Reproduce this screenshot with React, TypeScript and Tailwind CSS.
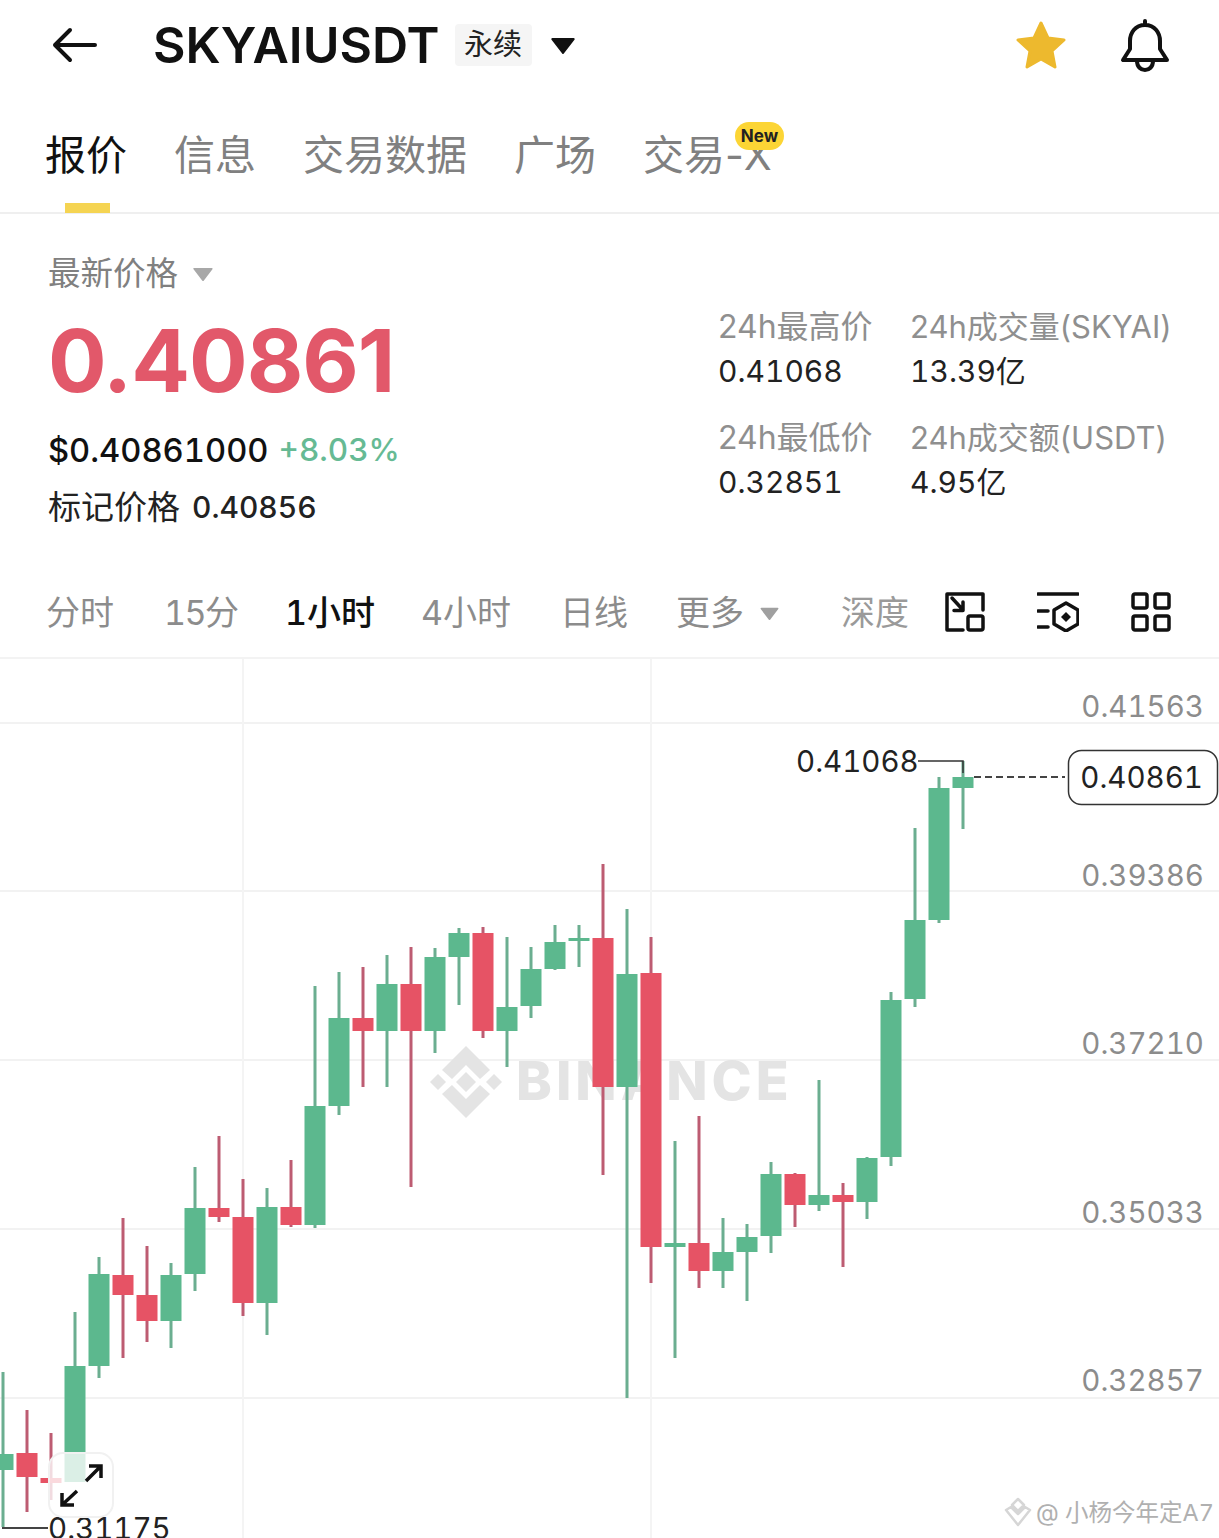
const tabs = ['报价', '信息', '交易数据', '广场', '交易-X'];

// x, wick top, wick bottom, body top, body bottom, up?
const candles: [number, number, number, number, number, boolean][] = [
  [3, 1372, 1527, 1454, 1470, true],
  [27, 1410, 1512, 1453, 1477, false],
  [51, 1433, 1500, 1478, 1483, false],
  [75, 1312, 1482, 1366, 1482, true],
  [99, 1257, 1378, 1274, 1366, true],
  [123, 1218, 1358, 1275, 1295, false],
  [147, 1246, 1342, 1295, 1321, false],
  [171, 1263, 1348, 1275, 1321, true],
  [195, 1167, 1291, 1208, 1274, true],
  [219, 1136, 1222, 1208, 1217, false],
  [243, 1179, 1316, 1217, 1303, false],
  [267, 1188, 1335, 1207, 1303, true],
  [291, 1160, 1227, 1207, 1225, false],
  [315, 986, 1228, 1106, 1225, true],
  [339, 972, 1115, 1018, 1106, true],
  [363, 967, 1087, 1018, 1031, false],
  [387, 955, 1087, 984, 1031, true],
  [411, 947, 1187, 984, 1031, false],
  [435, 948, 1053, 957, 1031, true],
  [459, 928, 1005, 933, 957, true],
  [483, 927, 1038, 933, 1031, false],
  [507, 937, 1067, 1007, 1031, true],
  [531, 947, 1018, 969, 1006, true],
  [555, 925, 970, 942, 969, true],
  [579, 925, 967, 938, 941, true],
  [603, 864, 1175, 938, 1087, false],
  [627, 909, 1398, 974, 1087, true],
  [651, 937, 1283, 973, 1247, false],
  [675, 1141, 1358, 1243, 1247, true],
  [699, 1116, 1288, 1243, 1271, false],
  [723, 1218, 1288, 1252, 1271, true],
  [747, 1224, 1301, 1237, 1252, true],
  [771, 1162, 1253, 1174, 1236, true],
  [795, 1173, 1227, 1174, 1205, false],
  [819, 1080, 1211, 1195, 1205, true],
  [843, 1183, 1267, 1195, 1202, false],
  [867, 1157, 1219, 1158, 1202, true],
  [891, 992, 1166, 1000, 1157, true],
  [915, 828, 1007, 920, 999, true],
  [939, 777, 923, 788, 920, true],
  [963, 761, 829, 777, 788, true],
];

const gridLines = [723, 891, 1060, 1229, 1398];
const axisLabels: [string, number][] = [
  ['0.41563', 717],
  ['0.39386', 886],
  ['0.37210', 1054],
  ['0.35033', 1223],
  ['0.32857', 1391],
  ['0.30680', 1560],
];

function Triangle({ className }: { className: string }) {
  return (
    <svg viewBox="0 0 24 16" className={className} fill="currentColor">
      <path d="M2 2h20L12 15z" stroke="currentColor" strokeWidth="2" strokeLinejoin="round" />
    </svg>
  );
}

function Stat({ label, value, wide }: { label: string; value: string; wide?: boolean }) {
  return (
    <div className={`shrink-0 ${wide ? 'w-[309px]' : 'w-[192px]'}`}>
      <div className={`leading-[44px] text-[#8f8f8f] whitespace-nowrap ${wide ? 'text-[31px]' : 'text-[32px]'}`}>{label}</div>
      <div className="text-[30px] leading-[44px] text-[#222] whitespace-nowrap tabular-nums">{value}</div>
    </div>
  );
}

function Chart() {
  return (
    <svg viewBox="0 659 1219 879" className="block w-full h-[879px] tabular-nums">
      {gridLines.map((y) => (
        <rect key={y} x="0" y={y - 1} width="1219" height="2" fill="#f2f2f2" />
      ))}
      <rect x="242" y="659" width="2" height="879" fill="#f4f4f4" />
      <rect x="650" y="659" width="2" height="879" fill="#f4f4f4" />

      {/* watermark */}
      <g fill="#e4e4e4">
        <path d="M466 1046l24 24-10 9-14-14-14 14-10-9z" />
        <path d="M466 1118l24-24-10-9-14 14-14-14-10 9z" />
        <path d="M466 1072l10 10-10 10-10-10zM438 1074l8 8-8 8-8-8zM494 1074l8 8-8 8-8-8z" />
        <text x="516" y="1100" fontSize="54" fontWeight="800" letterSpacing="4">BINANCE</text>
      </g>

      {candles.map(([x, top, bottom, bodyTop, bodyBottom, up]) => (
        <g key={x}>
          <rect x={x - 1.5} y={top} width="3" height={bottom - top} fill={up ? '#6bae90' : '#bd5c72'} />
          <rect x={x - 10.5} y={bodyTop} width="21" height={bodyBottom - bodyTop} fill={up ? '#5cb88e' : '#e65365'} />
        </g>
      ))}

      {axisLabels.map(([label, y]) => (
        <text key={label} x="1204" y={y} textAnchor="end" fontSize="29.5" fill="#8c8c8c">{label}</text>
      ))}

      {/* high / low markers */}
      <path d="M918 761h45v12" fill="none" stroke="#333" strokeWidth="1.5" />
      <text x="796" y="772" fontSize="29.5" fill="#222">0.41068</text>
      <path d="M3 1527v1h45" fill="none" stroke="#444" strokeWidth="2" />
      <text x="48" y="1539" fontSize="29.5" fill="#222">0.31175</text>

      {/* last price */}
      <path d="M974 777h91" fill="none" stroke="#444" strokeWidth="2" strokeDasharray="7 4" />
      <rect x="1068.5" y="750.5" width="149" height="54" rx="13" fill="#fff" stroke="#333" strokeWidth="1.5" />
      <text x="1203" y="788" textAnchor="end" fontSize="29.5" fill="#222">0.40861</text>

      {/* expand button */}
      <rect x="49" y="1453" width="64" height="64" rx="14" fill="#ffffff" fillOpacity="0.78" stroke="#f1f1f1" strokeWidth="2" />
      <path d="M86 1481l15-15M89 1466h12v12M77 1491l-15 14M62 1493v12h12" fill="none" stroke="#111" strokeWidth="3.5" />

      {/* author mark */}
      <g fill="none" stroke="#d6d6d6" strokeWidth="2.5" strokeLinejoin="round">
        <path d="M1018 1499l6 6-6 6-6-6zM1006 1510l5-3 7 7 7-7 5 3-12 15z" />
      </g>
      <text x="1036" y="1521" fontSize="23.5" fill="#b0b0b0">@ 小杨今年定A7</text>
    </svg>
  );
}

export default function App() {
  return (
    <div className="w-[1219px] h-[1538px] overflow-hidden bg-white text-[#111] font-['Inter','Noto_Sans_CJK_SC',sans-serif]">
      {/* header */}
      <div className="h-[90px] flex items-center pl-[52px] pr-[48px]">
        <svg viewBox="0 0 46 36" className="w-[46px] h-[36px] text-[#111]" fill="none" stroke="currentColor" strokeWidth="4" strokeLinecap="round" strokeLinejoin="round">
          <path d="M3 18h40M18 3L3 18l15 15" />
        </svg>
        <div className="ml-[55px] text-[50px] font-semibold leading-none">SKYAIUSDT</div>
        <div className="ml-[15px] w-[77px] h-[42px] flex items-center justify-center rounded bg-[#f5f5f5] text-[29px] text-[#222]">永续</div>
        <Triangle className="ml-[18px] w-[26px] h-[17px] text-[#111]" />
        <div className="flex-1" />
        <svg viewBox="0 0 52 50" className="w-[52px] h-[50px]" fill="#edb92e" stroke="#edb92e" strokeWidth="3" strokeLinejoin="round">
          <path d="M26 3l7 15 16 2-12 11 3 16-14-8-14 8 3-16L3 20l16-2z" />
        </svg>
        <svg viewBox="0 0 50 54" className="ml-[52px] w-[52px] h-[54px]" fill="none" stroke="#111" strokeWidth="4" strokeLinejoin="round" strokeLinecap="round">
          <path d="M25 7c-10 0-15 8-15 16v8L3 42h44l-7-11v-8c0-8-5-16-15-16zM25 7V3M17 43c0 12 16 12 16 0" />
        </svg>
      </div>

      {/* tabs */}
      <div className="relative h-[124px] flex items-start gap-[47px] pl-[45px] pt-[41px] border-b-2 border-[#efefef]">
        {tabs.map((tab, i) => (
          <div key={tab} className={`relative text-[41px] leading-[48px] whitespace-nowrap ${i === 0 ? 'text-[#111]' : 'text-[#808080]'}`}>
            {tab}
            {i === 4 && (
              <div className="absolute left-[92px] top-[-9px] w-[49px] h-[28px] rounded-full bg-[#fcd535] text-[17px] leading-[28px] font-bold text-center text-[#222]">New</div>
            )}
            {i === 0 && <div className="absolute left-[20px] top-[72px] w-[45px] h-[10px] bg-[#f5d452]" />}
          </div>
        ))}
      </div>

      {/* price section */}
      <div className="h-[370px] flex justify-between pl-[48px]">
        <div className="pt-[38px]">
          <div className="flex items-center text-[32.5px] leading-[44px] text-[#808080]">
            最新价格
            <Triangle className="ml-[14px] w-[22px] h-[14px] text-[#a8a8a8]" />
          </div>
          <div className="mt-[10px] text-[87px] leading-[110px] font-bold text-[#e2586a] tracking-[-1px]">0.40861</div>
          <div className="mt-[12px] flex items-center text-[32.7px] leading-[44px] font-medium whitespace-nowrap tabular-nums">
            $0.40861000
            <span className="ml-[10px] text-[31.5px] text-[#66ba94]">+8.03%</span>
          </div>
          <div className="mt-[13px] flex items-center text-[33px] leading-[44px] text-[#222] whitespace-nowrap">
            标记价格
            <span className="ml-[12px] text-[30px] font-medium tabular-nums">0.40856</span>
          </div>
        </div>
        <div className="pt-[91px] w-[501px] shrink-0">
          <div className="flex">
            <Stat label="24h最高价" value="0.41068" />
            <Stat label="24h成交量(SKYAI)" value="13.39亿" wide />
          </div>
          <div className="flex mt-[23px]">
            <Stat label="24h最低价" value="0.32851" />
            <Stat label="24h成交额(USDT)" value="4.95亿" wide />
          </div>
        </div>
      </div>

      {/* timeframes */}
      <div className="h-[75px] flex items-start pt-[6px] pl-[46px] border-b-2 border-[#f3f3f3] text-[34px] leading-[46px] text-[#8c8c8c] whitespace-nowrap tabular-nums">
        <div className="w-[118px]">分时</div>
        <div className="w-[121px] tracking-[-1.5px]">15分</div>
        <div className="w-[136px] text-[#111] font-medium">1小时</div>
        <div className="w-[139px]">4小时</div>
        <div className="w-[116px]">日线</div>
        <div className="flex items-center w-[165px]">
          更多
          <Triangle className="ml-[15px] w-[21px] h-[13px] text-[#a0a0a0]" />
        </div>
        <div className="w-[104px] text-[#9a9a9a]">深度</div>
        <div className="flex gap-[52px] pt-[2px]">
          <svg viewBox="0 0 40 40" className="w-[40px] h-[40px]" fill="none" stroke="#111" strokeWidth="3.5" strokeLinecap="round" strokeLinejoin="round">
            <path d="M38 18V2H2v36h16M7 6l11 12M18 10v8.5H9" />
            <rect x="23" y="24" width="15" height="14" rx="2" />
          </svg>
          <svg viewBox="0 0 42 40" className="w-[42px] h-[40px]" fill="none" stroke="#111" strokeWidth="3.5" strokeLinecap="round" strokeLinejoin="round">
            <path d="M1 2h40M1 19h10M1 35h10M29 11l12 7v14l-12 7-12-7V18z" />
            <path d="M29 20l5 5-5 5-5-5z" fill="#111" stroke="none" />
          </svg>
          <svg viewBox="0 0 40 40" className="w-[40px] h-[40px]" fill="none" stroke="#111" strokeWidth="3.5" strokeLinejoin="round">
            <rect x="2" y="2" width="14" height="14" rx="2" />
            <rect x="24" y="2" width="14" height="14" rx="2" />
            <rect x="2" y="24" width="14" height="14" rx="2" />
            <rect x="24" y="24" width="14" height="14" rx="2" />
          </svg>
        </div>
      </div>

      <Chart />
    </div>
  );
}
